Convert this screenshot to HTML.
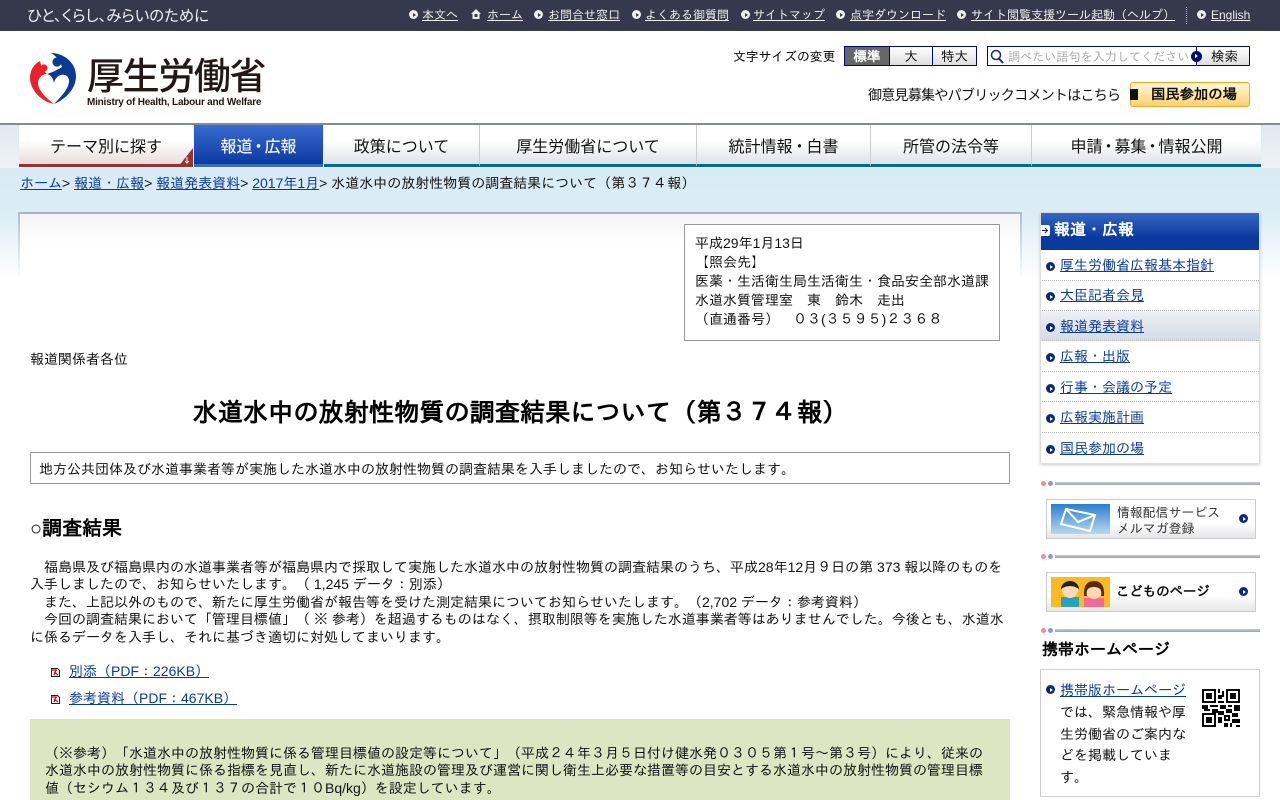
<!DOCTYPE html>
<html lang="ja"><head><meta charset="utf-8"><title>水道水中の放射性物質の調査結果について</title>
<style>
*{box-sizing:border-box}
html,body{margin:0;padding:0;width:1280px;height:800px;overflow:hidden;background:#fff}
body{position:relative;font-family:"Liberation Sans","IPAGothic","Noto Sans CJK JP",sans-serif;font-size:14px;color:#111}
.a{position:absolute;white-space:nowrap}
a{color:#0a3a9e;text-decoration:underline}
#top{left:0;top:0;width:1280px;height:31px;background:#343a4c}
.t{position:absolute;top:8px;font-size:12px;color:#eee;text-decoration:underline;white-space:nowrap;line-height:15px}
.d{position:absolute;width:9px;height:9px;border-radius:50%;background:#06287e}
.d:after{content:"";position:absolute;left:3.5px;top:2.5px;border-left:3px solid #fff;border-top:2px solid transparent;border-bottom:2px solid transparent}
.w{background:#eee}.w:after{border-left-color:#343a4c}
.nav{position:absolute;top:125px;height:42px;background:linear-gradient(#fff,#fff 40%,#dfe2e5);border-bottom:3px solid #006a9e;font-size:16px;color:#111;text-align:center;line-height:40px;border-right:1px solid #c8cdd0;font-family:"Noto Sans CJK JP",sans-serif}
.nav s{text-decoration:none;margin:0 -2px}
.side{position:absolute;left:1060px;font-size:14px;line-height:16px;white-space:nowrap}
.sep{position:absolute;left:1041px;width:219px;height:4px}
.sep i{position:absolute;top:0;width:5px;height:5px;border-radius:50%}
.sep b{position:absolute;left:7px;right:0;top:1px;height:3px;background:linear-gradient(#c5cad5,#98a2b3)}
.dash{position:absolute;left:1042px;width:217px;border-top:1px dotted #bbb}
.line{position:absolute;left:30px;font-size:14px;line-height:17px;white-space:nowrap;color:#111}
.bt{position:absolute;left:1046px;width:210px;height:40px;border:1px solid #ccc;background:linear-gradient(#fff,#fff 60%,#e4e5e7)}
</style></head><body>
<div class="a" id="top"></div>
<div class="a" style="left:27px;top:6px;font-size:15.4px;color:#f2f2f2;line-height:18px;font-family:'Noto Sans CJK JP',sans-serif;font-feature-settings:'palt'">ひと、くらし、みらいのために</div>

<i class="d w" style="left:409px;top:10px"></i><span class="t" style="left:422px">本文へ</span>
<svg class="a" style="left:470px;top:8px" width="12" height="12" viewBox="0 0 12 12"><path d="M6 1 1 6h1.5v5h7V6H11z" fill="#eee"/><rect x="4.5" y="6" width="3" height="3" fill="#343a4c"/></svg><span class="t" style="left:487px">ホーム</span>
<i class="d w" style="left:534px;top:10px"></i><span class="t" style="left:548px">お問合せ窓口</span>
<i class="d w" style="left:632px;top:10px"></i><span class="t" style="left:645px">よくある御質問</span>
<i class="d w" style="left:741px;top:10px"></i><span class="t" style="left:753px">サイトマップ</span>
<i class="d w" style="left:836px;top:10px"></i><span class="t" style="left:850px">点字ダウンロード</span>
<i class="d w" style="left:957px;top:10px"></i><span class="t" style="left:971px">サイト閲覧支援ツール起動（ヘルプ）</span>
<div class="a" style="left:1186px;top:7px;height:17px;border-left:1px dotted #bbb"></div>
<i class="d w" style="left:1197px;top:10px"></i><span class="t" style="left:1211px">English</span>

<svg class="a" style="left:26px;top:50px" width="54" height="58" viewBox="26 50 54 58">
<path d="M51 53C63 53 76 62 76 76C76 90 64 100 54 104C62 96 69 88 69 81C69 76 65 74 61 75C57 76 55 79 54 83C53 78 51 75 47 74C53 72 57 70 62 67C60 60 56 56 51 53Z" fill="#0b3a92"/>
<circle cx="57" cy="62" r="4.6" fill="#0b3a92"/>
<path d="M40 61C41 66 43 71 47 74C42 74 38 78 38 83C38 90 46 98 54 104C42 102 30 90 30 78C30 70 34 64 40 61Z" fill="#e8212a"/>
<circle cx="44" cy="68" r="3.6" fill="#e8212a"/>
</svg>
<div class="a" style="left:87px;top:47px;font-size:37px;line-height:52px;color:#231815;font-family:'Noto Sans CJK JP',sans-serif;font-weight:500;letter-spacing:-1.4px">厚生労働省</div>
<div class="a" style="left:87px;top:96px;font-size:10px;line-height:13px;color:#231815;font-weight:700;letter-spacing:-.22px">Ministry of Health, Labour and Welfare</div>

<div class="a" style="left:733px;top:49px;font-size:12.8px;line-height:16px;color:#000">文字サイズの変更</div>
<div class="a" style="left:844px;top:46px;width:46px;height:20px;border:1px solid #000a6e;background:#666;color:#fff;text-align:center;font-size:13.5px;line-height:20px;font-weight:700">標準</div>
<div class="a" style="left:889px;top:46px;width:44px;height:20px;border:1px solid #000a6e;background:linear-gradient(#fff,#ddd);color:#111;text-align:center;font-size:13.5px;line-height:20px">大</div>
<div class="a" style="left:932px;top:46px;width:45px;height:20px;border:1px solid #000a6e;background:linear-gradient(#fff,#ddd);color:#111;text-align:center;font-size:13.5px;line-height:20px">特大</div>
<div class="a" style="left:987px;top:46px;width:263px;height:20px;border:1px solid #000a6e;background:#fff"></div>
<svg class="a" style="left:990px;top:49px" width="14" height="15" viewBox="0 0 14 15"><circle cx="6" cy="6" r="4.5" fill="none" stroke="#0a2a8e" stroke-width="1.5"/><path d="M9 9.5 13 14" stroke="#0a2a8e" stroke-width="2"/></svg>
<div class="a" style="left:1008px;top:49px;font-size:12.1px;line-height:16px;color:#aaa">調べたい語句を入力してください</div>
<div class="a" style="left:1196px;top:47px;width:53px;height:18px;border-left:1px solid #000a6e;background:linear-gradient(#fff,#ddd);font-size:13.5px;line-height:19px;color:#111;padding-left:14px">検索</div>
<i class="d" style="left:1191px;top:51px;width:11px;height:11px;background:#000a6e"></i>
<div class="a" style="left:868px;top:86px;font-size:14px;line-height:18px;color:#111;letter-spacing:-.72px;font-family:'Noto Sans CJK JP',sans-serif">御意見募集やパブリックコメントはこちら</div>
<div class="a" style="left:1130px;top:82px;width:120px;height:25px;border:1px solid #f5a623;border-radius:3px;background:linear-gradient(#fff8dc,#ffd070);font-size:14.3px;line-height:25px;color:#111;padding-left:20px;font-weight:700">国民参加の場</div>
<div class="a" style="left:1130px;top:89px;width:8px;height:11px;background:#111"></div>

<div class="a" style="left:0;top:123px;width:1280px;height:2px;background:#7c8c9c"></div>
<div class="a" style="left:0;top:125px;width:1280px;height:43px;background:linear-gradient(#dfe9ee,#eef3f5)"></div>
<div class="a" style="left:0;top:168px;width:1280px;height:112px;background:linear-gradient(#d8eaf4,#dcedf6 40%,#fff)"></div>
<div class="nav" style="left:19px;width:174px;border-bottom-color:#9a3030;border-right:0;background:linear-gradient(#fff,#fff 40%,#e8dcdc)">テーマ別に探す</div>
<svg class="a" style="left:178px;top:148px" width="15" height="19" viewBox="0 0 15 19"><path d="M15 0V19H0z" fill="#9a3030"/><path d="M9 9v6M7 13l2 2 2-2" stroke="#fff" fill="none"/></svg>
<div class="nav" style="left:194px;width:129px;background:linear-gradient(#3a6bd0,#0a3a9e);border-bottom-color:#3a6bc8;border-right:0;font-weight:500;color:#eef">報道<s>・</s>広報</div>
<div class="nav" style="left:324px;width:156px">政策について</div>
<div class="nav" style="left:480px;width:217px">厚生労働省について</div>
<div class="nav" style="left:697px;width:174px">統計情報<s style="margin:0 -1px">・</s>白書</div>
<div class="nav" style="left:871px;width:161px">所管の法令等</div>
<div class="nav" style="left:1032px;width:229px;border-right:0">申請<s>・</s>募集<s>・</s>情報公開</div>

<div class="a" style="left:20px;top:175px;font-size:14px;line-height:17px;color:#111"><a href="#">ホーム</a>&gt; <a href="#">報道・広報</a>&gt; <a href="#">報道発表資料</a>&gt; <a href="#">2017年1月</a>&gt; 水道水中の放射性物質の調査結果について（第３７４報）</div>

<div class="a" style="left:18px;top:212px;width:1004px;height:600px;background:#fff;border-top:2px solid #a5b3c4"></div>
<div class="a" style="left:18px;top:212px;width:2px;height:68px;background:linear-gradient(#b0bccb,#fff)"></div>
<div class="a" style="left:1020px;top:212px;width:2px;height:68px;background:linear-gradient(#b0bccb,#fff)"></div>
<div class="a" style="left:20px;top:214px;width:1000px;height:30px;background:linear-gradient(#f2f3f4,#fff)"></div>

<div class="a" style="left:684px;top:224px;width:316px;height:117px;border:1px solid #999;background:#fff"></div>
<div class="line" style="left:695px;top:234px;line-height:19px">平成29年1月13日<br>【照会先】<br>医薬・生活衛生局生活衛生・食品安全部水道課<br>水道水質管理室　東　鈴木　走出<br>（直通番号）　０３(３５９５)２３６８</div>

<div class="line" style="top:351px">報道関係者各位</div>
<div class="a" style="left:30px;top:397px;width:980px;text-align:center;font-size:25.2px;line-height:32px;font-weight:700;color:#000">水道水中の放射性物質の調査結果について（第３７４報）</div>
<div class="a" style="left:30px;top:452px;width:980px;height:32px;border:1px solid #999"></div>
<div class="line" style="left:39px;top:461px">地方公共団体及び水道事業者等が実施した水道水中の放射性物質の調査結果を入手しましたので、お知らせいたします。</div>
<div class="a" style="left:30px;top:515px;font-size:20px;line-height:28px;font-weight:700;color:#000">○調査結果</div>

<div class="line" style="top:558.6px;line-height:17.6px">　福島県及び福島県内の水道事業者等が福島県内で採取して実施した水道水中の放射性物質の調査結果のうち、平成28年12月９日の第 373 報以降のものを<br>入手しましたので、お知らせいたします。（ 1,245 データ：別添）<br>　また、上記以外のもので、新たに厚生労働省が報告等を受けた測定結果についてお知らせいたします。（2,702 データ：参考資料）<br>　今回の調査結果において「管理目標値」（ ※ 参考）を超過するものはなく、摂取制限等を実施した水道事業者等はありませんでした。今後とも、水道水<br>に係るデータを入手し、それに基づき適切に対処してまいります。</div>

<svg class="a" style="left:51px;top:668px" width="9" height="9" viewBox="0 0 9 9"><path d="M.5.5h6l2 2v6h-8z" fill="#fff" stroke="#222"/><path d="M0 2h6M5 2 3 7M3 4l4 3" stroke="#e00" stroke-width="1.2" fill="none"/></svg>
<div class="line" style="left:69px;top:663px"><a href="#">別添（PDF：226KB）</a></div>
<svg class="a" style="left:51px;top:695px" width="9" height="9" viewBox="0 0 9 9"><path d="M.5.5h6l2 2v6h-8z" fill="#fff" stroke="#222"/><path d="M0 2h6M5 2 3 7M3 4l4 3" stroke="#e00" stroke-width="1.2" fill="none"/></svg>
<div class="line" style="left:69px;top:690px"><a href="#">参考資料（PDF：467KB）</a></div>

<div class="a" style="left:30px;top:719px;width:980px;height:81px;background:#dde5c3"></div>
<div class="line" style="left:45px;top:744.5px;line-height:17.6px">（※参考）「水道水中の放射性物質に係る管理目標値の設定等について」（平成２４年３月５日付け健水発０３０５第１号～第３号）により、従来の<br>水道水中の放射性物質に係る指標を見直し、新たに水道施設の管理及び運営に関し衛生上必要な措置等の目安とする水道水中の放射性物質の管理目標<br>値（セシウム１３４及び１３７の合計で１０Bq/kg）を設定しています。</div>

<!-- side -->
<div class="a" style="left:1040px;top:212px;width:220px;height:252px;background:#fff;border:1px solid #ddd;box-shadow:0 1px 3px rgba(0,0,0,.2)"></div>
<div class="a" style="left:1041px;top:213px;width:218px;height:37px;background:linear-gradient(#3567c5,#0a3a9e 65%);color:#fff;font-size:16px;font-weight:700;line-height:36px;padding-left:13px">報道・広報</div>
<svg class="a" style="left:1041px;top:225px" width="9" height="11" viewBox="0 0 9 11"><path d="M0 0h7q2 0 2 2v7q0 2-2 2H0z" fill="#fff"/><path d="M1 5.500h5M4 3l2.500 2.500L4 8" stroke="#06287e" fill="none"/></svg>
<div class="a" style="left:1041px;top:311px;width:218px;height:30px;background:linear-gradient(#eef0f4,#d3dbe6)"></div>
<div class="dash" style="top:280px"></div><div class="dash" style="top:310px"></div><div class="dash" style="top:340px"></div><div class="dash" style="top:371px"></div><div class="dash" style="top:401px"></div><div class="dash" style="top:432px"></div>
<i class="d" style="left:1046px;top:262px"></i><a class="side" href="#" style="top:257px">厚生労働省広報基本指針</a>
<i class="d" style="left:1046px;top:292px"></i><a class="side" href="#" style="top:287px">大臣記者会見</a>
<i class="d" style="left:1046px;top:323px"></i><a class="side" href="#" style="top:318px">報道発表資料</a>
<i class="d" style="left:1046px;top:353px"></i><a class="side" href="#" style="top:348px">広報・出版</a>
<i class="d" style="left:1046px;top:384px"></i><a class="side" href="#" style="top:379px">行事・会議の予定</a>
<i class="d" style="left:1046px;top:414px"></i><a class="side" href="#" style="top:409px">広報実施計画</a>
<i class="d" style="left:1046px;top:445px"></i><a class="side" href="#" style="top:440px">国民参加の場</a>

<div class="sep" style="top:481px"><i style="left:0;background:#f88"></i><i style="left:7px;background:#8a9cc8"></i><b style="left:14px"></b></div>
<div class="bt" style="top:499px"></div>
<svg class="a" style="left:1051px;top:504px" width="59" height="30" viewBox="0 0 59 30"><defs><linearGradient id="s" x1="0" y1="0" x2="0" y2="1"><stop offset="0" stop-color="#2a7fd0"/><stop offset="1" stop-color="#b8d8ee"/></linearGradient></defs><rect width="59" height="30" fill="url(#s)"/><path d="M15 5 44 11 39 27 10 20Z M15 5 27 18 44 11" fill="none" stroke="#fff" stroke-width="2"/></svg>
<div class="a" style="left:1117px;top:505px;font-size:12.9px;line-height:16px;color:#333">情報配信サービス<br>メルマガ登録</div>
<i class="d" style="left:1239px;top:514px"></i>

<div class="sep" style="top:554px"><i style="left:0;background:#f88"></i><i style="left:7px;background:#8a9cc8"></i><b style="left:14px"></b></div>
<div class="bt" style="top:572px"></div>
<svg class="a" style="left:1051px;top:577px" width="59" height="30" viewBox="0 0 59 30"><rect width="59" height="30" fill="#fbb924"/><rect x="10" y="20" width="18" height="10" fill="#2aa0c0"/><circle cx="19" cy="13" r="8" fill="#fcd9b0"/><path d="M10 12a9 8 0 0 1 18 0q-9-6-18 0z" fill="#222"/><rect x="33" y="21" width="20" height="9" fill="#f06a9a"/><circle cx="43" cy="14" r="8" fill="#fcd9b0"/><path d="M33 19q-1-15 10-15t10 15l-3 0q2-9-7-9t-7 9z" fill="#5a2a10"/></svg>
<div class="a" style="left:1116px;top:583px;font-size:13.4px;line-height:17px;color:#111;font-weight:700">こどものページ</div>
<i class="d" style="left:1239px;top:587px"></i>

<div class="sep" style="top:628px"><i style="left:0;background:#f88"></i><i style="left:7px;background:#8a9cc8"></i><b style="left:14px"></b></div>
<div class="a" style="left:1042px;top:640px;font-size:16px;line-height:21px;font-weight:700;color:#000">携帯ホームページ</div>
<div class="a" style="left:1040px;top:669px;width:220px;height:128px;border:1px solid #ccc"></div>
<i class="d" style="left:1046px;top:685px"></i>
<div class="side" style="top:680px;line-height:21.8px;color:#111"><a href="#">携帯版ホームページ</a><br>では、緊急情報や厚<br>生労働省のご案内な<br>どを掲載していま<br>す。</div>
<svg class="a" style="left:1202px;top:689px" width="38" height="38" viewBox="0 0 19 19" shape-rendering="crispEdges"><path fill="#000" d="M0 0h7v7H0zM12 0h7v7h-7zM0 12h7v7H0zM8 0h1v2H8zM10 1h1v3h-1zM8 3h2v2H8zM8 6h3v1H8zM0 8h3v2H0zM4 8h4v1H4zM9 8h3v2H9zM13 8h2v1h-2zM16 8h3v3h-3zM1 10h3v1H1zM5 10h3v2H5zM12 10h3v2h-3zM8 11h3v2H8zM8 14h2v3H8zM11 13h3v3h-3zM15 12h3v2h-3zM15 15h4v2h-4zM11 17h2v2h-2zM14 17h1v2h-1zM17 18h2v1h-2z"/><path fill="#fff" d="M1 1h5v5H1zM13 1h5v5h-5zM1 13h5v5H1zM12 14h1v1h-1z"/><path fill="#000" d="M2 2h3v3H2zM14 2h3v3h-3zM2 14h3v3H2z"/></svg>
</body></html>
